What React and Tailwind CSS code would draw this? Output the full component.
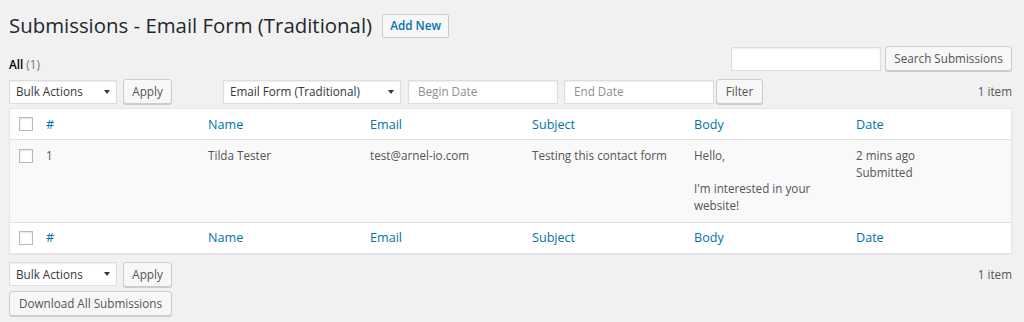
function Arrow() {
    return (
        <svg width="6" height="4" viewBox="0 0 6 4" className="shrink-0">
            <polygon points="0,0 6,0 3,4" fill="#32373c" />
        </svg>
    )
}

function Select({ label, className }) {
    return (
        <div className={`flex h-[24px] items-center justify-between border border-[#ddd] bg-white pl-[6px] pr-[6px] text-[#32373c] shadow-[inset_0_1px_2px_rgba(0,0,0,0.07)] ${className}`}>
            <span>{label}</span>
            <Arrow />
        </div>
    )
}

function Button({ children, className }) {
    return (
        <div className={`flex h-[25px] items-center justify-center rounded-[3px] border border-[#ccc] bg-[#f7f7f7] text-[#555] shadow-[0_1px_0_#ccc] ${className}`}>
            {children}
        </div>
    )
}

function Input({ placeholder, className }) {
    return (
        <div className={`flex h-[24px] items-center border border-[#ddd] bg-white pl-[9px] text-[#8c8f94] shadow-[inset_0_1px_2px_rgba(0,0,0,0.07)] ${className}`}>
            {placeholder}
        </div>
    )
}

function Checkbox() {
    return <span className="block h-[14px] w-[14px] border border-[#b4b9be] bg-white shadow-[inset_0_1px_2px_rgba(0,0,0,0.1)]" />
}

const cols = "grid grid-cols-[26px_162px_162px_162px_162px_162px_1fr]"
const headers = ["#", "Name", "Email", "Subject", "Body", "Date"]

function HeadRow({ border }) {
    return (
        <div className={`${cols} h-[31px] items-center ${border}`}>
            <div className="pl-[9px]">
                <Checkbox />
            </div>
            {headers.map((h) => (
                <div key={h} className="px-[10px] text-[12.6px] text-[#0073aa]">{h}</div>
            ))}
        </div>
    )
}

export default function App() {
    return (
        <div className="min-h-screen bg-[#f1f1f1] pl-[9px] pr-[12px] font-['Open_Sans',sans-serif] text-[11.7px] leading-[17px] text-[#555]">
            <div className="flex items-center gap-[10px] pt-[12px]">
                <h1 className="text-[20.4px] leading-[27px] text-[#23282d]">Submissions - Email Form (Traditional)</h1>
                <div className="flex h-[24px] w-[67px] items-center justify-center rounded-[2px] border border-[#ccc] bg-[#f7f7f7] font-semibold text-[#0073aa]">
                    Add New
                </div>
            </div>

            <div className="mt-[7px] flex items-end justify-between">
                <div className="mb-[-2px]">
                    <span className="font-semibold text-black">All</span> <span className="text-[#777]">(1)</span>
                </div>
                <div className="flex items-center gap-[4px]">
                    <div className="h-[24px] w-[150px] border border-[#ddd] bg-white shadow-[inset_0_1px_2px_rgba(0,0,0,0.07)]" />
                    <Button className="w-[127px]">Search Submissions</Button>
                </div>
            </div>

            <div className="mt-[8px] flex h-[25px] items-center">
                <Select label="Bulk Actions" className="w-[108px]" />
                <Button className="ml-[6px] w-[49px]">Apply</Button>
                <Select label="Email Form (Traditional)" className="ml-[51px] w-[178px]" />
                <Input placeholder="Begin Date" className="ml-[7px] w-[150px]" />
                <Input placeholder="End Date" className="ml-[6px] w-[150px]" />
                <Button className="ml-[2px] w-[47px]">Filter</Button>
                <span className="ml-auto">1 item</span>
            </div>

            <div className="mt-[4px] border border-[#e5e5e5] bg-white shadow-[0_1px_1px_rgba(0,0,0,0.04)]">
                <HeadRow border="border-b border-[#e1e1e1]" />
                <div className={`${cols} items-start bg-[#f9f9f9] pt-[7px] pb-[8px] leading-[16.7px]`}>
                    <div className="mt-[2px] pl-[9px]">
                        <Checkbox />
                    </div>
                    <div className="px-[10px]">1</div>
                    <div className="px-[10px]">Tilda Tester</div>
                    <div className="px-[10px]">test@arnel-io.com</div>
                    <div className="px-[10px]">Testing this contact form</div>
                    <div className="px-[10px]">
                        Hello,
                        <br />
                        <br />
                        I'm interested in your website!
                    </div>
                    <div className="px-[10px]">
                        2 mins ago
                        <br />
                        Submitted
                    </div>
                </div>
                <HeadRow border="border-t border-[#e1e1e1]" />
            </div>

            <div className="mt-[8px] flex h-[25px] items-center">
                <Select label="Bulk Actions" className="w-[108px]" />
                <Button className="ml-[6px] w-[49px]">Apply</Button>
                <span className="ml-auto">1 item</span>
            </div>
            <Button className="mt-[4px] h-[24px] w-[163px]">Download All Submissions</Button>
        </div>
    )
}
